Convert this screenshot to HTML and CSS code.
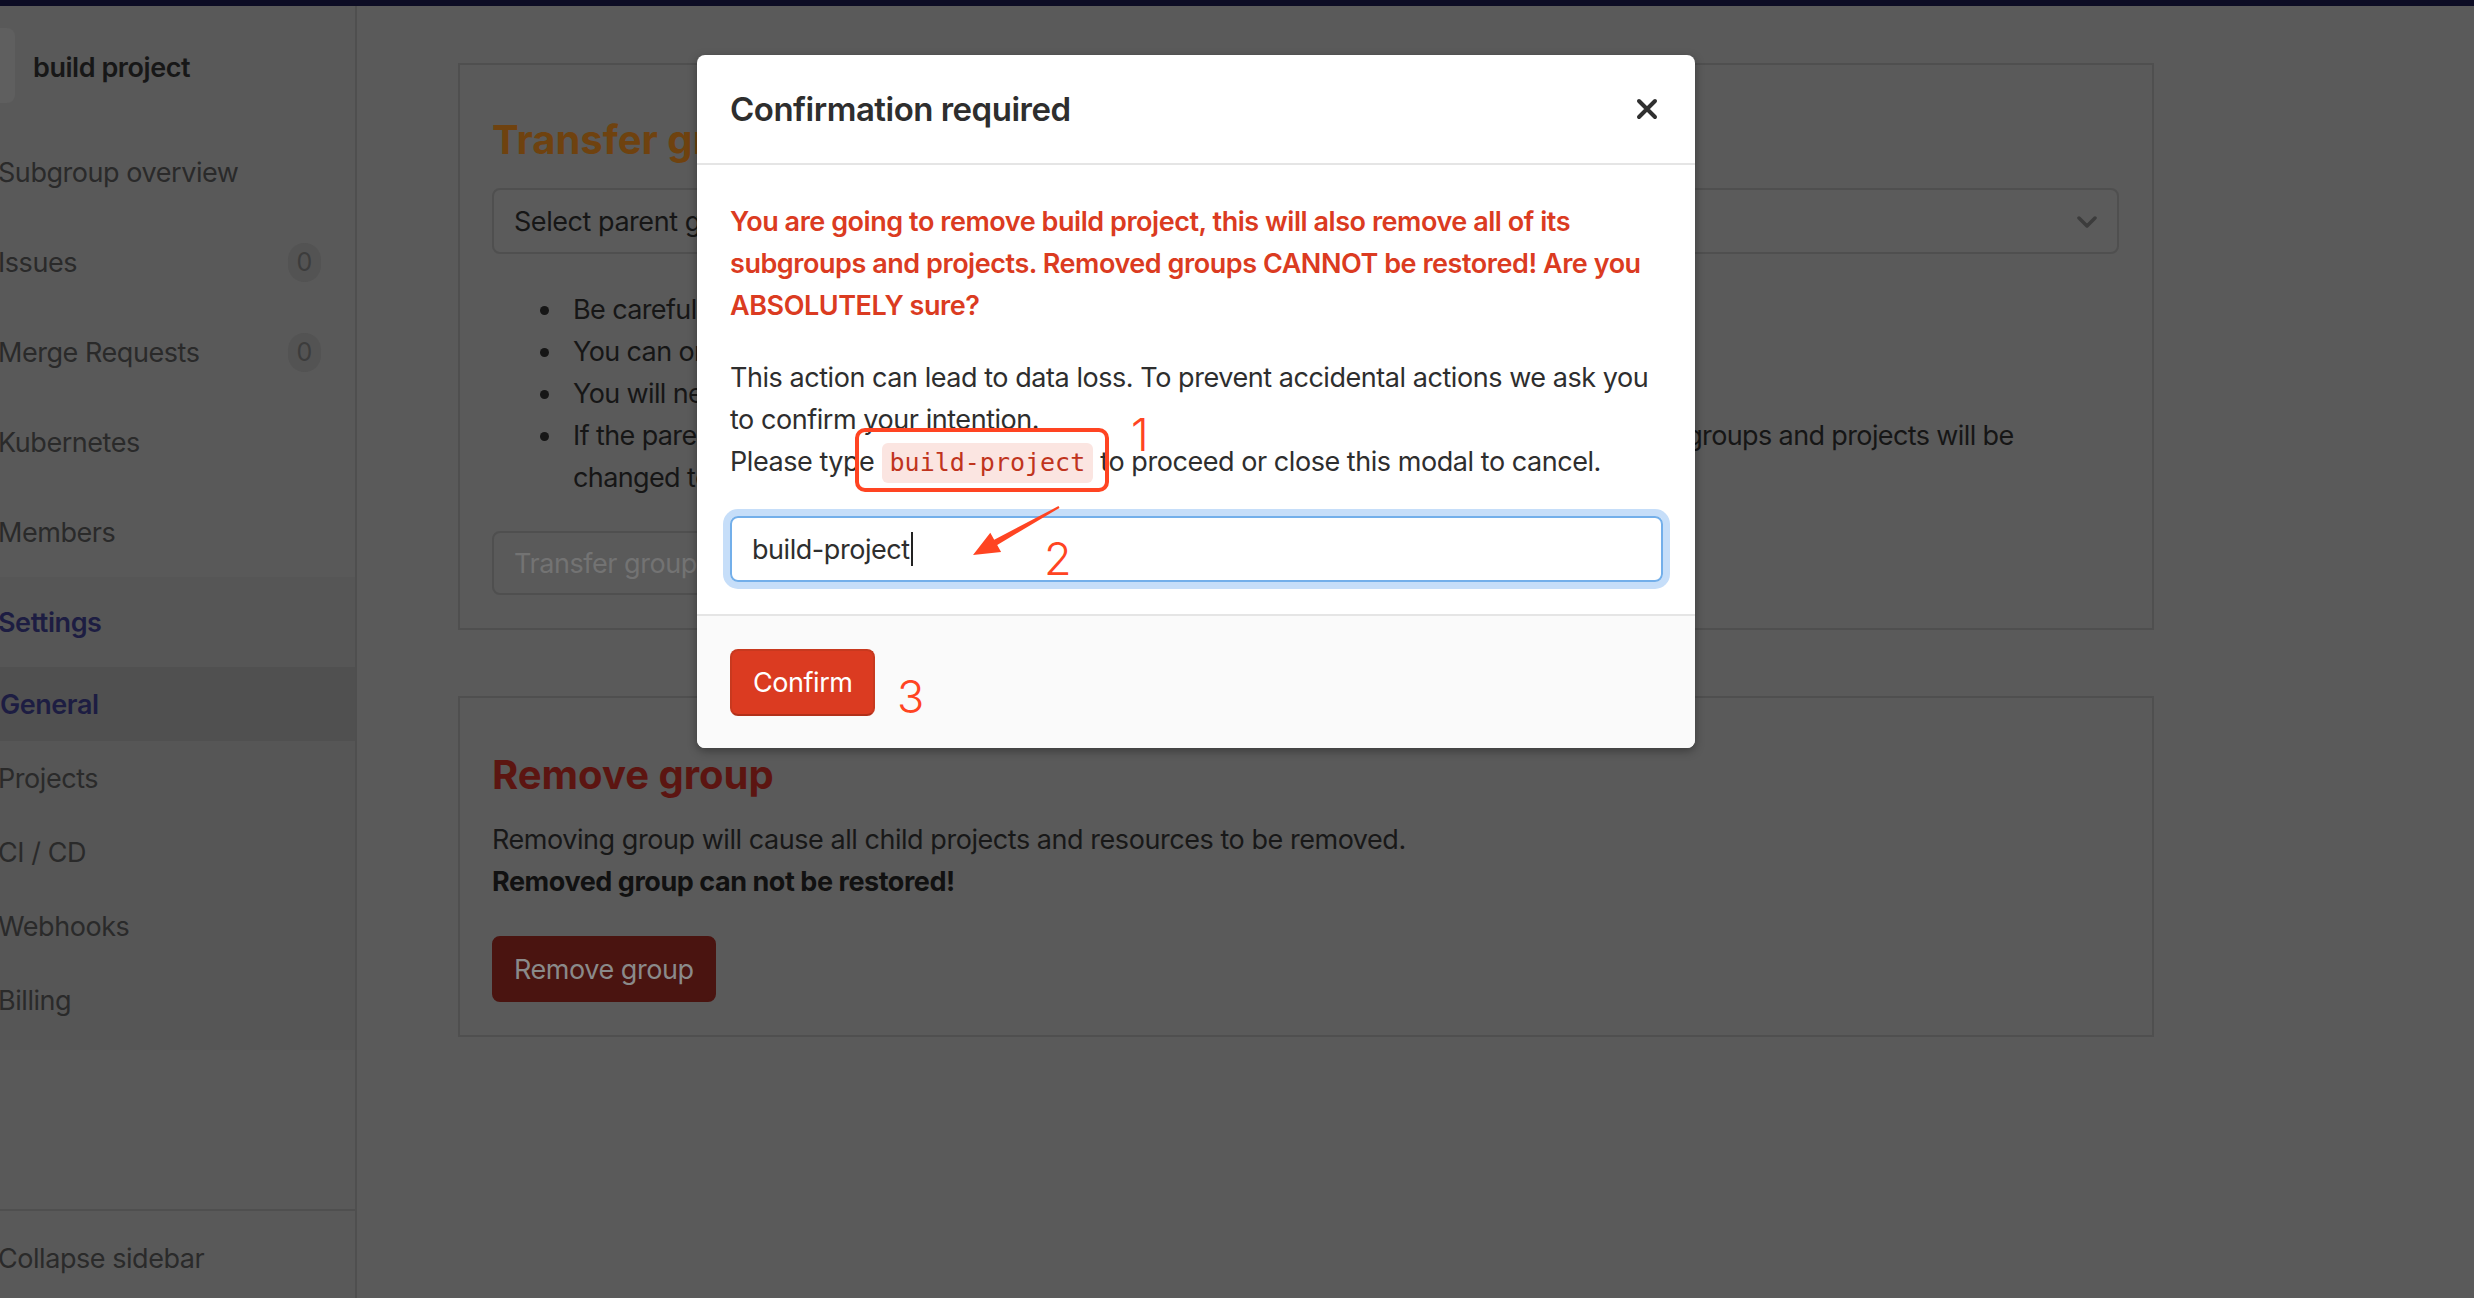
FILE: index.html
```html
<!DOCTYPE html>
<html lang="en">
<head>
<meta charset="utf-8">
<title>General Settings · build project</title>
<link rel="stylesheet" href="styles.css">
</head>
<body>
<div class="topbar"></div>
<div class="layout">
  <aside class="sidebar">
    <div class="sidebar-context">
      <div class="avatar"></div>
      <span class="context-name">build project</span>
    </div>
    <ul class="nav">
      <li class="nav-item"><span>Subgroup overview</span></li>
      <li class="nav-item"><span>Issues</span><span class="badge">0</span></li>
      <li class="nav-item"><span>Merge Requests</span><span class="badge">0</span></li>
      <li class="nav-item"><span>Kubernetes</span></li>
      <li class="nav-item"><span>Members</span></li>
      <li class="nav-section">
        <div class="nav-item nav-item-active"><span>Settings</span></div>
        <ul class="subnav">
          <li class="subnav-item subnav-item-active">General</li>
          <li class="subnav-item">Projects</li>
          <li class="subnav-item">CI / CD</li>
          <li class="subnav-item">Webhooks</li>
          <li class="subnav-item">Billing</li>
        </ul>
      </li>
    </ul>
    <div class="collapse-row">Collapse sidebar</div>
  </aside>

  <main class="content">
    <section class="settings-box">
      <h4 class="box-title title-warning">Transfer group</h4>
      <div class="select">
        <span>Select parent group</span>
        <svg class="chevron" width="20" height="14" viewBox="0 0 20 14"><polyline points="2,3 10,11 18,3" fill="none" stroke="#3c3c3c" stroke-width="3.5" stroke-linecap="round" stroke-linejoin="round"/></svg>
      </div>
      <ul class="warnings">
        <li>Be careful. Changing a group's parent can have unintended side effects.</li>
        <li>You can only transfer the group to a group you manage.</li>
        <li>You will need to update your local repositories to point to the new location.</li>
        <li>If the parent group's visibility is lower than the group current visibility, visibility levels for subgroups and projects will be<br>changed to match the new parent group's visibility.</li>
      </ul>
      <button class="btn btn-disabled" type="button">Transfer group</button>
    </section>

    <section class="settings-box">
      <h4 class="box-title title-danger">Remove group</h4>
      <p class="box-text">Removing group will cause all child projects and resources to be removed.<br><strong>Removed group can not be restored!</strong></p>
      <button class="btn btn-remove" type="button">Remove group</button>
    </section>
  </main>
</div>

<div class="modal" role="dialog" aria-modal="true">
  <div class="modal-header">
    <h4 class="modal-title">Confirmation required</h4>
    <svg class="modal-close" width="22" height="22" viewBox="0 0 22 22"><path d="M3 3 L19 19 M19 3 L3 19" stroke="#303030" stroke-width="4" stroke-linecap="round"/></svg>
  </div>
  <div class="modal-body">
    <p class="danger-text">You are going to remove build project, this will also remove all of its subgroups and projects. Removed groups CANNOT be restored! Are you ABSOLUTELY sure?</p>
    <p class="body-text">This action can lead to data loss. To prevent accidental actions we ask you to confirm your intention.<br>Please type <code class="code-chip">build-project</code> to proceed or close this modal to cancel.</p>
    <div class="fake-input" role="textbox">build-project<span class="caret"></span></div>
  </div>
  <div class="modal-footer">
    <button class="btn-confirm" type="button">Confirm</button>
  </div>
</div>

<div class="annot-box"></div>
<div class="annot-num annot-1">1</div>
<div class="annot-num annot-2">2</div>
<div class="annot-num annot-3">3</div>
<svg class="annot-arrow" width="110" height="65" viewBox="0 0 110 65">
  <polygon points="98.5,6.1 34.2,39.7 30.3,32.7 13,55 41.1,51.9 37.2,44.9 99.5,7.9" fill="#ff4422"/>
</svg>
</body>
</html>
```

FILE: styles.css
```css
* { box-sizing: border-box; }

html, body {
  margin: 0;
  padding: 0;
  height: 100%;
}

body {
  background: #5a5a5a;
  font-family: Inter, "Noto Sans", "Liberation Sans", sans-serif;
  font-size: 27px;
  letter-spacing: -0.45px;
  color: #262626;
  overflow: hidden;
  position: relative;
}

.topbar {
  height: 6px;
  background: #0c0c24;
}

.layout {
  display: flex;
  height: calc(100vh - 6px);
}

/* ---------- sidebar ---------- */
.sidebar {
  width: 357px;
  flex: 0 0 357px;
  background: #595959;
  border-right: 2px solid #4f4f4f;
  display: flex;
  flex-direction: column;
  overflow: hidden;
}

.sidebar-context {
  display: flex;
  align-items: flex-start;
  padding-top: 22px;
  height: 121px;
}

.sidebar-context .avatar {
  width: 15px;
  height: 75px;
  background: #5f5f5f;
  border-radius: 0 8px 8px 0;
  margin-right: 18px;
}

.context-name {
  font-weight: 600;
  color: #171717;
  margin-top: 23px;
}

.nav, .subnav {
  list-style: none;
  margin: 0;
  padding: 0;
}

.nav-item {
  height: 90px;
  display: flex;
  align-items: center;
  justify-content: space-between;
  padding-right: 34px;
  margin-left: -2px;
  color: #2a2a2a;
}

.badge {
  width: 33px;
  height: 39px;
  border-radius: 20px;
  background: #535353;
  color: #3c3c3c;
  font-size: 25px;
  letter-spacing: 0;
  display: flex;
  align-items: center;
  justify-content: center;
}

.nav-section {
  background: #565656;
  padding-bottom: 13px;
}

.nav-item-active {
  font-weight: 600;
  color: #1d1d42;
}

.subnav-item {
  height: 74px;
  display: flex;
  align-items: center;
  margin-left: -2px;
  color: #2a2a2a;
}

.subnav-item-active {
  background: #505050;
  color: #1d1d42;
  font-weight: 600;
  margin-left: 0;
  padding-left: 0;
}

.collapse-row {
  margin-top: auto;
  border-top: 2px solid #4f4f4f;
  flex: 0 0 89px;
  display: flex;
  align-items: center;
  padding-top: 8px;
  margin-left: -2px;
  color: #2a2a2a;
}

/* ---------- content ---------- */
.content {
  flex: 1;
  padding: 57px 320px 0 101px;
}

.settings-box {
  border: 2px solid #4f4f4f;
  padding: 0 33px 33px 32px;
  margin-bottom: 66px;
}

.box-title {
  margin: 51px 0 24px;
  font-size: 40px;
  line-height: 48px;
  font-weight: 700;
  letter-spacing: 0;
}

.title-warning { color: #6f420f; }
.title-danger { color: #5c1511; margin-top: 53px; margin-bottom: 20px; }

.select {
  height: 66px;
  border: 2px solid #4f4f4f;
  border-radius: 8px;
  background: #5b5b5b;
  display: flex;
  align-items: center;
  justify-content: space-between;
  padding: 0 20px 0 20px;
  color: #161616;
  margin-bottom: 35px;
}

.chevron { margin-top: 2px; }

.warnings {
  margin: 0 0 32px;
  padding-left: 81px;
  line-height: 42px;
  color: #161616;
  list-style: none;
  letter-spacing: -0.62px;
}

.warnings li {
  position: relative;
}

.warnings li::before {
  content: "";
  position: absolute;
  left: -33px;
  top: 17px;
  width: 9px;
  height: 9px;
  border-radius: 50%;
  background: #161616;
}

.btn {
  font-family: inherit;
  font-size: 27px;
  letter-spacing: -0.45px;
  height: 64px;
  padding: 0 20px;
  border-radius: 8px;
  display: block;
  white-space: nowrap;
}

.btn-disabled {
  background: #5a5a5a;
  border: 2px solid #4f4f4f;
  color: #737373;
  padding-right: 24px;
}

.box-text {
  margin: 0 0 33px;
  line-height: 42px;
  color: #181818;
}

.box-text strong {
  font-weight: 700;
  color: #111;
}

.btn-remove {
  height: 66px;
  background: #4a1410;
  border: 2px solid #4a1410;
  color: #8a8a8a;
  padding: 0 20px;
}

/* ---------- modal ---------- */
.modal {
  position: absolute;
  left: 697px;
  top: 55px;
  width: 998px;
  background: #fff;
  border-radius: 8px;
  box-shadow: 0 3px 10px rgba(0, 0, 0, 0.35);
  overflow: hidden;
}

.modal-header {
  display: flex;
  align-items: center;
  justify-content: space-between;
  padding: 32px 37px 32px 33px;
  border-bottom: 2px solid #e5e5e5;
}

.modal-title {
  margin: 0;
  font-size: 33px;
  letter-spacing: -0.5px;
  line-height: 44px;
  font-weight: 600;
  color: #2e2e2e;
}

.modal-body {
  padding: 36px 32px 32px 33px;
}

.danger-text {
  margin: 0 0 30px;
  color: #db3b21;
  font-weight: 600;
  line-height: 42px;
}

.body-text {
  margin: 0 0 32px;
  line-height: 42px;
  color: #2e2e2e;
}

.code-chip {
  font-family: "DejaVu Sans Mono", "Liberation Mono", monospace;
  font-size: 25px;
  letter-spacing: 0;
  background: #fbe5e1;
  color: #c0341d;
  border-radius: 6px;
  padding: 5px 8px 6px 8px;
}

.fake-input {
  height: 66px;
  border: 2px solid #73afea;
  border-radius: 8px;
  box-shadow: 0 0 0 7px #c6def9;
  display: flex;
  align-items: center;
  padding: 0 20px;
  color: #2e2e2e;
}

.caret {
  display: inline-block;
  width: 2px;
  height: 34px;
  background: #222;
  margin-left: 1px;
}

.modal-footer {
  background: #fafafa;
  border-top: 2px solid #e5e5e5;
  padding: 33px 32px 32px 33px;
}

.btn-confirm {
  font-family: inherit;
  font-size: 27px;
  letter-spacing: -0.45px;
  color: #fff;
  background: #db3b21;
  border: 2px solid #c8391f;
  border-bottom-color: #b1301a;
  border-radius: 8px;
  height: 67px;
  padding: 0 21px;
}

/* ---------- annotations ---------- */
.annot-box {
  position: absolute;
  left: 855px;
  top: 428px;
  width: 254px;
  height: 64px;
  border: 4px solid #ff4422;
  border-radius: 10px;
}

.annot-num {
  position: absolute;
  font-family: Inter, "Liberation Sans", sans-serif;
  font-weight: 300;
  font-size: 45px;
  letter-spacing: 0;
  line-height: 1;
  color: #ff4422;
}

.annot-1 { left: 1131px; top: 412px; }
.annot-2 { left: 1044px; top: 536px; }
.annot-3 { left: 897px; top: 674px; }

.annot-arrow {
  position: absolute;
  left: 960px;
  top: 500px;
}
```
